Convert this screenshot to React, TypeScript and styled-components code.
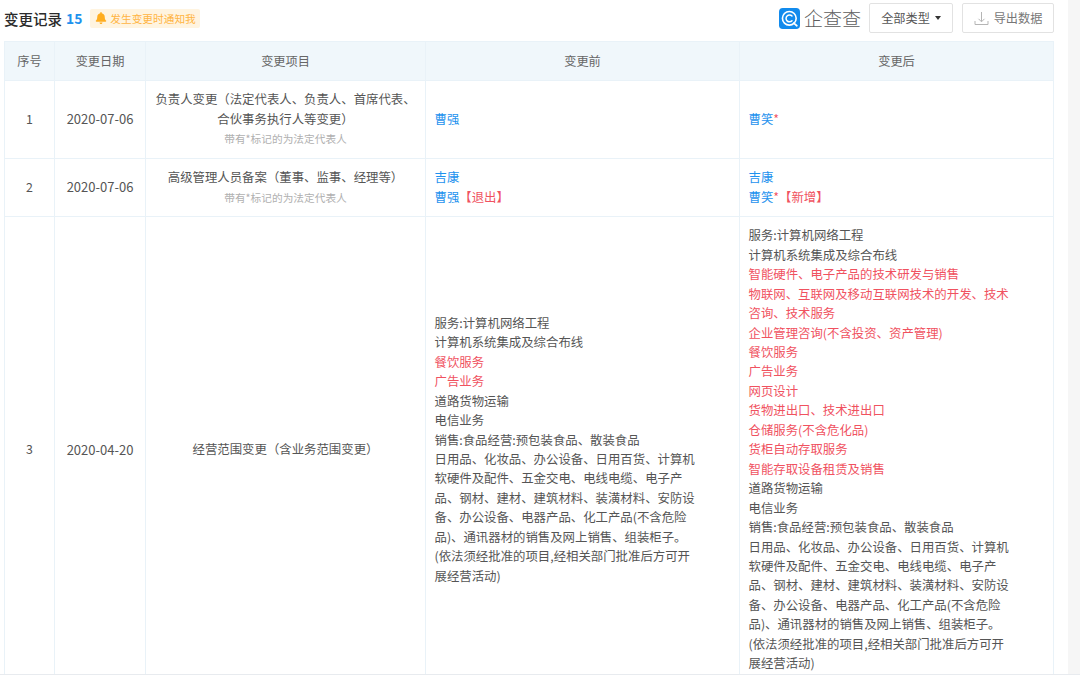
import React from "react";
import styled, { createGlobalStyle } from "styled-components";
import { FaBell } from "react-icons/fa";

const GlobalStyle = createGlobalStyle`
  html, body {
    margin: 0;
    padding: 0;
    background: #fff;
    overflow: hidden;
  }
`;

const Page = styled.div`
  width: 1080px;
  height: 681px;
  display: flex;
  flex-direction: column;
  overflow: hidden;
  font-family: "Noto Sans CJK SC", "Noto Sans", sans-serif;
  font-size: 12.4px;
  color: #333;
`;

const Frame = styled.div`
  display: flex;
  height: 675px;
  flex: none;
  border-bottom: 1px solid #e8ebef;
  box-sizing: border-box;
`;

const Main = styled.div`
  width: 1068px;
  box-sizing: border-box;
  padding: 0 14px 0 4px;
  overflow: hidden;
`;

const Strip = styled.div`
  width: 12px;
  background: #f6f6f6;
`;

const Toolbar = styled.div`
  height: 41px;
  display: flex;
  align-items: center;
  padding-bottom: 5px;
  box-sizing: border-box;
`;

const Title = styled.span`
  font-size: 14.5px;
  font-weight: 500;
  color: #2b2b2b;
`;

const Count = styled.span`
  font-size: 13.8px;
  font-weight: 700;
  color: #1e92ee;
  margin-left: 4px;
`;

const Notice = styled.span`
  display: flex;
  align-items: center;
  gap: 3px;
  height: 19px;
  margin-left: 8px;
  padding: 0 4px 0 5px;
  border-radius: 2px;
  background: #fff4e0;
  color: #ffb443;
  font-size: 10.7px;
`;

const Spacer = styled.div`
  flex: 1;
`;

const Logo = styled.div`
  display: flex;
  align-items: center;
  gap: 4px;
  margin-right: 8px;
`;

const LogoText = styled.span`
  font-size: 19px;
  font-weight: 300;
  color: #5c5c5c;
  line-height: 1;
  margin-top: -1px;
`;

const ActionButton = styled.button<{ $muted?: boolean }>`
  display: flex;
  align-items: center;
  justify-content: center;
  gap: 5px;
  height: 30px;
  margin-left: ${(p) => (p.$muted ? "9px" : "0")};
  width: ${(p) => (p.$muted ? "92px" : "84px")};
  padding: 0;
  background: #fff;
  border: 1px solid #e2e2e2;
  border-radius: 2px;
  font: inherit;
  font-size: 12.2px;
  color: ${(p) => (p.$muted ? "#777" : "#555")};
`;

const Caret = styled.i`
  width: 0;
  height: 0;
  border-left: 3.5px solid transparent;
  border-right: 3.5px solid transparent;
  border-top: 4px solid #333;
`;

const Table = styled.table`
  width: 1049px;
  table-layout: fixed;
  border-collapse: collapse;
`;

const Head = styled.th`
  height: 38px;
  padding: 0;
  background: #f0f7fb;
  border: 1px solid #e9f2f8;
  font-weight: 400;
  color: #666;
  font-size: 12.2px;
  text-align: center;
`;

const Cell = styled.td<{ $center?: boolean }>`
  padding: 9px ${(p) => (p.$center ? "8px" : "8.5px")};
  border: 1px solid #e9f2f8;
  line-height: 19.45px;
  text-align: ${(p) => (p.$center ? "center" : "left")};
  color: #555;
`;

const Row = styled.tr<{ $height: number }>`
  height: ${(p) => p.$height}px;
`;

const DateText = styled.span`
  font-size: 13px;
`;

const Hint = styled.div`
  font-size: 10.7px;
  color: #b0b0b0;
`;

const Person = styled.span`
  color: #1e92ee;
`;

const Mark = styled.span`
  color: #f0525f;
`;

const Lines = styled.div`
  width: 266px;
`;

const Line = styled.div<{ $added?: boolean }>`
  color: ${(p) => (p.$added ? "#f0525f" : "#555")};
`;

function QccLogo() {
  return (
    <svg width="21" height="21" viewBox="0 0 22 22">
      <rect width="22" height="22" rx="4" fill="#128bed" />
      <circle cx="10.8" cy="10.8" r="7.2" fill="none" stroke="#fff" strokeWidth="1.7" />
      <path d="M13.6 8.4a3.6 3.6 0 1 0 0 5" fill="none" stroke="#fff" strokeWidth="1.6" strokeLinecap="round" />
      <path d="M15.5 15.8l3.2 2.8" stroke="#fff" strokeWidth="1.8" strokeLinecap="round" />
    </svg>
  );
}

function ExportIcon() {
  return (
    <svg width="15" height="15" viewBox="0 0 15 15" fill="none" stroke="#b5b5b5" strokeWidth="1">
      <path d="M7.5 1v9.5M4.5 7.8l3 3 3-3M1 10v3.5h13V10" />
    </svg>
  );
}

const scopeTail = [
  "道路货物运输",
  "电信业务",
  "销售:食品经营:预包装食品、散装食品",
  "日用品、化妆品、办公设备、日用百货、计算机软硬件及配件、五金交电、电线电缆、电子产品、钢材、建材、建筑材料、装潢材料、安防设备、办公设备、电器产品、化工产品(不含危险品)、通讯器材的销售及网上销售、组装柜子。",
  "(依法须经批准的项目,经相关部门批准后方可开展经营活动)",
];

const before = [
  { text: "服务:计算机网络工程" },
  { text: "计算机系统集成及综合布线" },
  { text: "餐饮服务", added: true },
  { text: "广告业务", added: true },
  ...scopeTail.map((text) => ({ text })),
];

const after = [
  { text: "服务:计算机网络工程" },
  { text: "计算机系统集成及综合布线" },
  { text: "智能硬件、电子产品的技术研发与销售", added: true },
  { text: "物联网、互联网及移动互联网技术的开发、技术咨询、技术服务", added: true },
  { text: "企业管理咨询(不含投资、资产管理)", added: true },
  { text: "餐饮服务", added: true },
  { text: "广告业务", added: true },
  { text: "网页设计", added: true },
  { text: "货物进出口、技术进出口", added: true },
  { text: "仓储服务(不含危化品)", added: true },
  { text: "货柜自动存取服务", added: true },
  { text: "智能存取设备租赁及销售", added: true },
  ...scopeTail.map((text) => ({ text })),
];

function Scope({ items }: { items: { text: string; added?: boolean }[] }) {
  return (
    <Lines>
      {items.map((item, i) => (
        <Line key={i} $added={item.added}>
          {item.text}
        </Line>
      ))}
    </Lines>
  );
}

export default function App() {
  return (
    <Page>
      <GlobalStyle />
      <Frame>
        <Main>
          <Toolbar>
            <Title>变更记录</Title>
            <Count>15</Count>
            <Notice>
              <FaBell size={12} color="#ffad1f" />
              发生变更时通知我
            </Notice>
            <Spacer />
            <Logo>
              <QccLogo />
              <LogoText>企查查</LogoText>
            </Logo>
            <ActionButton>
              全部类型 <Caret />
            </ActionButton>
            <ActionButton $muted>
              <ExportIcon />
              导出数据
            </ActionButton>
          </Toolbar>
          <Table>
            <colgroup>
              <col width="50" />
              <col width="91" />
              <col width="280" />
              <col width="314" />
              <col width="314" />
            </colgroup>
            <thead>
              <tr>
                <Head>序号</Head>
                <Head>变更日期</Head>
                <Head>变更项目</Head>
                <Head>变更前</Head>
                <Head>变更后</Head>
              </tr>
            </thead>
            <tbody>
              <Row $height={78}>
                <Cell $center>1</Cell>
                <Cell $center>
                  <DateText>2020-07-06</DateText>
                </Cell>
                <Cell $center>
                  负责人变更（法定代表人、负责人、首席代表、合伙事务执行人等变更）
                  <Hint>带有*标记的为法定代表人</Hint>
                </Cell>
                <Cell>
                  <Person>曹强</Person>
                </Cell>
                <Cell>
                  <Person>曹笑</Person>
                  <Mark>*</Mark>
                </Cell>
              </Row>
              <Row $height={58}>
                <Cell $center>2</Cell>
                <Cell $center>
                  <DateText>2020-07-06</DateText>
                </Cell>
                <Cell $center>
                  高级管理人员备案（董事、监事、经理等）
                  <Hint>带有*标记的为法定代表人</Hint>
                </Cell>
                <Cell>
                  <Person>吉康</Person>
                  <br />
                  <Person>曹强</Person>
                  <Mark>【退出】</Mark>
                </Cell>
                <Cell>
                  <Person>吉康</Person>
                  <br />
                  <Person>曹笑</Person>
                  <Mark>*【新增】</Mark>
                </Cell>
              </Row>
              <Row $height={467}>
                <Cell $center>3</Cell>
                <Cell $center>
                  <DateText>2020-04-20</DateText>
                </Cell>
                <Cell $center>经营范围变更（含业务范围变更）</Cell>
                <Cell>
                  <Scope items={before} />
                </Cell>
                <Cell>
                  <Scope items={after} />
                </Cell>
              </Row>
            </tbody>
          </Table>
        </Main>
        <Strip />
      </Frame>
    </Page>
  );
}
